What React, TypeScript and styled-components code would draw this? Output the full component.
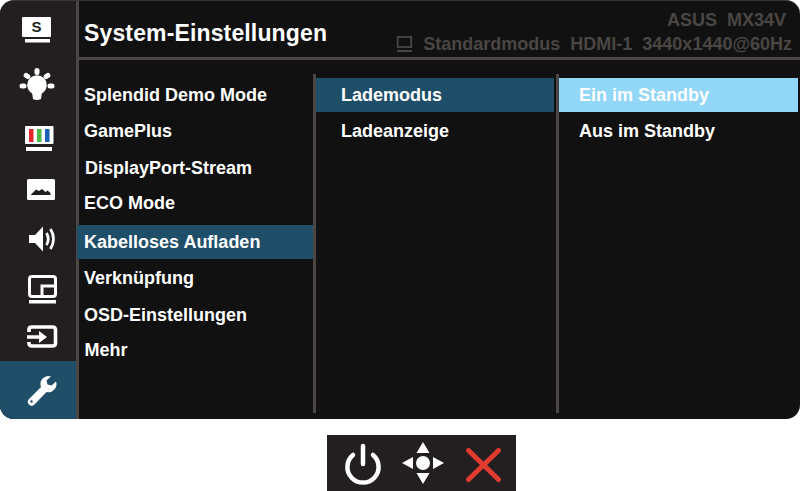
import React from "react";
import styled, { createGlobalStyle } from "styled-components";

const Global = createGlobalStyle`
  html, body { margin: 0; padding: 0; background: #fff; }
  body { width: 800px; height: 491px; overflow: hidden; font-family: "Liberation Sans", Arial, sans-serif; }
`;
const Page = styled.div`display: flex; flex-direction: column; width: 800px; height: 491px;`;
const Panel = styled.div`
  display: flex; height: 419px; background: #111111; border-radius: 14px; overflow: hidden;
  border-top: 1px solid #3a3634; box-sizing: border-box;
`;
const Sidebar = styled.nav`
  width: 76px; flex: none; display: flex; flex-direction: column; background: #231f20;
  border-right: 3px solid #4b4644; box-sizing: content-box;
`;
const IconCell = styled.div<{ $h: number; $active?: boolean }>`
  height: ${(p) => p.$h}px; flex: ${(p) => (p.$active ? "1" : "none")};
  display: flex; align-items: center; justify-content: center;
  background: ${(p) => (p.$active ? "#1f4e69" : "transparent")};
`;
const Main = styled.div`flex: 1; display: flex; flex-direction: column; min-width: 0;`;
const Header = styled.header`
  height: 56px; flex: none; display: flex; align-items: flex-start;
  border-bottom: 3px solid #4b4644; padding-left: 5px;
`;
const Title = styled.h1`
  margin: 17px 0 0; font-size: 23px; line-height: 30px; font-weight: 700; color: #fff; letter-spacing: 0.14px;
`;
const Status = styled.div`
  margin-left: auto; display: flex; flex-direction: column; align-items: flex-end; padding: 9px 8px 0 0;
  color: #4a4644; font-size: 18px; font-weight: 700; line-height: 20px;
`;
const Model = styled.div`padding-right: 6px; white-space: pre;`;
const Mode = styled.div`display: flex; align-items: center; gap: 10px; margin-top: 4px; white-space: pre;`;
const Columns = styled.div`flex: 1; display: flex; min-height: 0;`;
const Column = styled.div<{ $w: number; $sep?: boolean }>`
  width: ${(p) => p.$w}px; flex: none; position: relative; padding-top: 18px; box-sizing: border-box;
  ${(p) => p.$sep && `
    &::after { content: ""; position: absolute; right: 0; top: 14px; bottom: 6px; width: 3px; background: #4b4644; }
  `}
`;
const Row = styled.div<{ $gap: number; $state?: "on" | "light"; $pad: number; $inset: number; $bleed?: number }>`
  height: 34px; box-sizing: border-box; margin-top: ${(p) => p.$gap}px; margin-right: ${(p) => p.$inset}px;
  margin-left: ${(p) => -(p.$bleed ?? 0)}px;
  padding-left: ${(p) => p.$pad + (p.$bleed ?? 0)}px; padding-top: ${(p) => (p.$bleed ? 1 : 0)}px;
  display: flex; align-items: center; position: relative;
  font-size: 18px; font-weight: 700; color: #fff;
  background: ${(p) => (p.$state === "on" ? "#1f4e69" : p.$state === "light" ? "#92d6f8" : "transparent")};
`;
const Keys = styled.div`
  width: 189px; height: 56px; margin: 16px 0 0 327px; background: #231f20;
  display: flex; align-items: center; justify-content: center;
`;

const W = "#ffffff";
const Ic = ({ children, h = 34, vb }: { children: React.ReactNode; h?: number; vb: string }) => (
  <svg width={40} height={h} viewBox={vb}>{children}</svg>
);

const items = [
  ["Splendid Demo Mode", 0, 5], ["GamePlus", 2, 5], ["DisplayPort-Stream", 3, 6], ["ECO Mode", 1, 5],
  ["Kabelloses Aufladen", 5, 5], ["Verknüpfung", 2, 5], ["OSD-Einstellungen", 3, 5], ["Mehr", 1, 5.5],
] as const;

export default function App() {
  return (
    <Page>
      <Global />
      <Panel>
        <Sidebar>
          <IconCell $h={60}>
            <Ic vb="0 0 40 34">
              <rect x="4" y="3" width="29" height="20" rx="1" fill={W} />
              <text x="18.500" y="18" textAnchor="middle" fontSize="15" fontWeight="700" fontFamily="Liberation Sans" fill="#231f20">S</text>
              <rect x="7" y="25" width="25" height="3.500" fill={W} />
            </Ic>
          </IconCell>
          <IconCell $h={48}>
            <Ic vb="0 0 40 40" h={40}>
              <circle cx="19" cy="20" r="9.800" fill={W} />
              <path d="M14 27h10l-1 7q-4 2-8 0z" fill={W} />
              <rect x="16.500" y="3" width="5" height="7" rx="2.500" fill={W} />
              <rect x="1.500" y="18.500" width="7" height="5" rx="2.500" fill={W} />
              <rect x="29.500" y="18.500" width="7" height="5" rx="2.500" fill={W} />
              <rect x="5.500" y="8.500" width="7" height="5" rx="2.500" transform="rotate(35 9 11)" fill={W} />
              <rect x="25.500" y="8.500" width="7" height="5" rx="2.500" transform="rotate(-35 29 11)" fill={W} />
            </Ic>
          </IconCell>
          <IconCell $h={64}>
            <Ic vb="0 0 40 34">
              <rect x="7" y="2" width="28.500" height="18" rx="1" fill={W} />
              <rect x="11" y="5" width="4.500" height="13" fill="#e3272b" />
              <rect x="19" y="5" width="4.500" height="13" fill="#4db848" />
              <rect x="27" y="5" width="4.500" height="13" fill="#1b62b5" />
              <rect x="8" y="23" width="26" height="4" fill={W} />
            </Ic>
          </IconCell>
          <IconCell $h={34}>
            <Ic vb="0 0 40 34">
              <rect x="9" y="6" width="28" height="21" rx="1.500" fill={W} />
              <path d="M13 21.500l5-5 3 1.500 3-2 3.500 3 2-1.500 3 2.500v2H13z" fill="#231f20" />
            </Ic>
          </IconCell>
          <IconCell $h={64}>
            <Ic vb="0 0 40 34">
              <path d="M11 13h6l8-8.500v25L17 21h-6z" fill={W} />
              <path d="M28.500 11q3.500 6 0 12" fill="none" stroke={W} strokeWidth="2.800" />
              <path d="M32.500 7q6 10 0 20" fill="none" stroke={W} strokeWidth="2.800" />
            </Ic>
          </IconCell>
          <IconCell $h={38}>
            <Ic vb="0 0 40 34">
              <rect x="11.500" y="3.500" width="26" height="20" rx="2.500" fill="none" stroke={W} strokeWidth="3" />
              <path d="M24 24V13h13" fill="none" stroke={W} strokeWidth="3" />
              <rect x="27" y="16" width="8" height="5" fill="#231f20" />
              <rect x="11" y="27" width="27" height="3.500" fill={W} />
            </Ic>
          </IconCell>
          <IconCell $h={52}>
            <Ic vb="0 0 40 34">
              <path d="M11 14v-2.500q0-2.500 3-2.500h20.500q3 0 3 3v13q0 3-3 3H14q-3 0-3-2.500V24" fill="none" stroke={W} strokeWidth="3.600" />
              <path d="M9 19h14" stroke={W} strokeWidth="3.600" />
              <path d="M21 13l8 6-8 6z" fill={W} />
            </Ic>
          </IconCell>
          <IconCell $h={57} $active>
            <Ic vb="0 0 40 34">
              <path d="M33 3.500a8 8 0 0 0-10 10.500L11 26a3.800 3.800 0 0 0 5.500 5.500L28.500 19a8 8 0 0 0 9.500-10.500L33.500 12.500l-4-1-1-4z" fill={W} />
              <circle cx="13.500" cy="28.500" r="1.200" fill="#1f4e69" />
            </Ic>
          </IconCell>
        </Sidebar>
        <Main>
          <Header>
            <Title>System-Einstellungen</Title>
            <Status>
              <Model>ASUS  MX34V</Model>
              <Mode>
                <svg width="17" height="17" viewBox="0 0 17 17">
                  <rect x="1.700" y="1" width="13.500" height="10" fill="none" stroke="#4a4644" strokeWidth="1.800" />
                  <rect x="1" y="14" width="15" height="2" fill="#4a4644" />
                </svg>
                <span>Standardmodus  HDMI-1  3440x1440@60Hz</span>
              </Mode>
            </Status>
          </Header>
          <Columns>
            <Column $w={237} $sep>
              {items.map(([label, gap, pad]) => {
                const on = label === "Kabelloses Aufladen";
                return (
                  <Row key={label} $gap={gap} $pad={pad} $inset={3} $bleed={on ? 2 : 0} $state={on ? "on" : undefined}>
                    {label}
                  </Row>
                );
              })}
            </Column>
            <Column $w={243} $sep>
              <Row $gap={0} $pad={25} $inset={5} $state="on">Lademodus</Row>
              <Row $gap={2} $pad={25} $inset={5}>Ladeanzeige</Row>
            </Column>
            <Column $w={241}>
              <Row $gap={0} $pad={20} $inset={2} $state="light">Ein im Standby</Row>
              <Row $gap={2} $pad={20} $inset={2}>Aus im Standby</Row>
            </Column>
          </Columns>
        </Main>
      </Panel>
      <Keys>
        <svg width="189" height="56" viewBox="0 0 189 56">
          <path d="M26 20a15.600 15.600 0 1 0 20 0" fill="none" stroke={W} strokeWidth="4.500" strokeLinecap="round" />
          <path d="M36 11v18" stroke={W} strokeWidth="4.500" strokeLinecap="round" />
          <circle cx="96" cy="28" r="7" fill={W} />
          <path d="M96 7l6.500 11h-13zM96 49l6.500-11h-13zM75 28l11-6v12zM117 28l-11-6v12z" fill={W} />
          <path d="M141.500 15.500l30 29M171.500 15.500l-30 29" stroke="#e13a2e" strokeWidth="5" strokeLinecap="round" />
        </svg>
      </Keys>
    </Page>
  );
}
